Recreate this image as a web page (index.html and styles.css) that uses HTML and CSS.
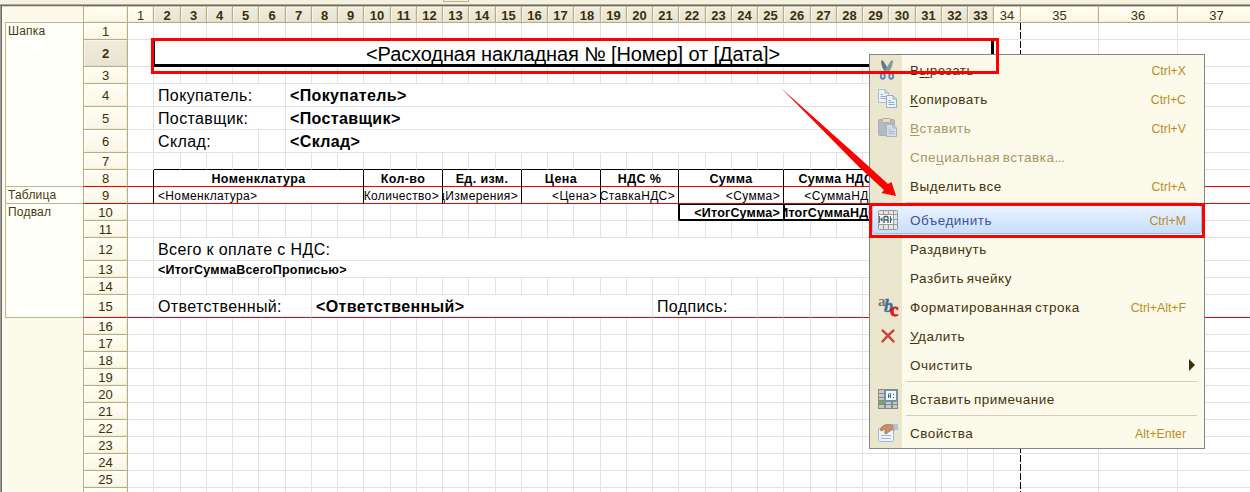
FILE: index.html
```html
<!DOCTYPE html>
<html lang="ru">
<head>
<meta charset="utf-8">
<title>Макет</title>
<link rel="stylesheet" href="styles.css">
</head>
<body>
<div class="window">
  <div class="toolbar"><span class="toolbar-tab"></span></div>
  <div class="sheet">
    <div class="sections">
      <div class="section-top"></div>
      <div class="section section-header">Шапка</div>
      <div class="section section-table">Таблица</div>
      <div class="section section-footer">Подвал</div>
    </div>
    <div class="grid" id="grid"></div>
  </div>

  <div class="page-break"></div>

  <div class="menu">
    <div class="item"><span class="icon"><svg width="20" height="20" viewBox="0 0 20 20"><path d="M3 .5L5 .5 11.500 11 9 14Q3 8 3 .5Z" fill="#5f788a"/><path d="M15 .5L13 .5 6.500 11 9 14Q15 8 15 .5Z" fill="#8699a5"/><ellipse cx="4.800" cy="16" rx="2" ry="2.800" fill="none" stroke="#5688b5" stroke-width="1.900"/><ellipse cx="13.200" cy="16" rx="2" ry="2.800" fill="none" stroke="#5688b5" stroke-width="1.900"/></svg></span><span class="label">В<u>ы</u>резать</span><span class="key">Ctrl+X</span></div>
    <div class="item"><span class="icon"><svg width="20" height="20" viewBox="0 0 20 20"><path d="M.5 .5H7L10.500 4V13.500H.5Z" fill="#edf4fa" stroke="#a9bfd4"/><path d="M7 .5V4H10.500M2.500 5.500H5M2.500 7.500H8M2.500 9.500H8" fill="none" stroke="#91acc7"/><path d="M8.500 6.500H15L18.500 10V18.500H8.500Z" fill="#edf4fa" stroke="#93b1cf"/><path d="M15 6.500V10H18.500M10.500 11.500H13M10.500 13.500H16.500M10.500 15.500H16.500" fill="none" stroke="#86a9cb"/></svg></span><span class="label"><u>К</u>опировать</span><span class="key">Ctrl+C</span></div>
    <div class="item off"><span class="icon"><svg width="20" height="20" viewBox="0 0 20 20"><rect x=".5" y="1.500" width="16" height="16" rx="1" fill="#b3bac4" stroke="#a7aeb8"/><rect x="4.500" y=".5" width="8" height="4" rx="1" fill="#e4dfcb" stroke="#b7a989"/><path d="M8.500 6.500H15L18.500 10V18.500H8.500Z" fill="#d4dce6" stroke="#a5b3c6"/><path d="M15 6.500V10H18.500M10.500 11.500H13M10.500 13.500H16.500M10.500 15.500H16.500" fill="none" stroke="#a5b5c9"/></svg></span><span class="label"><u>В</u>ставить</span><span class="key">Ctrl+V</span></div>
    <div class="item off"><span class="icon"></span><span class="label">Спе<u>ц</u>иальная вставка<span class="dots">...</span></span></div>
    <div class="item"><span class="icon"></span><span class="label">Вы<u>д</u>елить все</span><span class="key">Ctrl+A</span></div>
    <div class="sep"></div>
    <div class="item active"><span class="icon"><svg width="20" height="20" viewBox="0 0 20 20"><rect x=".5" y=".5" width="19" height="19" rx="1" fill="#e5e5e5" stroke="#999"/><path d="M0 4.500H20M0 14.500H20M5.500 0V5M10.500 0V5M15.500 0V20M5.500 14V20M10.500 14V20M15 9.500H20" fill="none" stroke="#9b9b9b"/><rect x="1" y="5" width="14" height="9" fill="#f5f9fc"/><path d="M1.500 6V13M12.500 6V13" stroke="#56728a" fill="none"/><path d="M2 9.500L4.500 7V12ZM14.500 9.500L12 7V12Z" fill="#33658d"/><path d="M6 13V7.500Q6 6.500 7 6.500H9Q10 6.500 10 7.500V13M6 10H10" fill="none" stroke="#4b5961" stroke-width="1.300"/></svg></span><span class="label">Объединить</span><span class="key">Ctrl+M</span></div>
    <div class="item"><span class="icon"></span><span class="label">Раздвинуть</span></div>
    <div class="item"><span class="icon"></span><span class="label">Разбить ячейку</span></div>
    <div class="item"><span class="icon abc"><i class="abc-a">a</i><i class="abc-b">b</i><i class="abc-c">c</i></span><span class="label">Форматированная строка</span><span class="key">Ctrl+Alt+F</span></div>
    <div class="item"><span class="icon"><svg width="20" height="20" viewBox="0 0 20 20"><path d="M4.500 4.500Q10 9 15.500 15.500M15.500 4.500Q9 10 4.500 15.500" fill="none" stroke="#c8453b" stroke-width="2.300" stroke-linecap="round"/></svg></span><span class="label"><u>У</u>далить</span></div>
    <div class="item"><span class="icon"></span><span class="label">Очистить</span><span class="more"></span></div>
    <div class="sep"></div>
    <div class="item"><span class="icon"><svg width="20" height="20" viewBox="0 0 20 20"><rect width="20" height="20" fill="#858b8c"/><path d="M1 1H6V4H1ZM1 5H6V8H1ZM1 9H6V11H1ZM1 16H6V19H1ZM8 16H13V19H8ZM15 16H19V19H15ZM8 13H13V15H8ZM15 13H19V15H15Z" fill="#c9cac5"/><path d="M1 12H6V14H1Z" fill="#65b548"/><rect x="7.500" y="1.500" width="11" height="10" fill="#edf7fc" stroke="#6598b5"/><path d="M10.500 9V5.500Q10.500 4.500 11.500 4.500T12.500 5.500V9M10.500 7H12.500M15.500 5V6M15.500 8V9" fill="none" stroke="#396481"/></svg></span><span class="label">Вставить примечание</span></div>
    <div class="sep"></div>
    <div class="item"><span class="icon"><svg width="20" height="20" viewBox="0 0 20 20"><rect x=".5" y="5.500" width="15" height="13" rx="1" fill="#edf5fc" stroke="#9eb8ce"/><path d="M3 12.500H13M3 15.500H13" stroke="#a0bad1" fill="none"/><path d="M2 6Q5 1 10 1.500L16 2 17 7Q14 6 12 8L8 11Q6 11 7 8L8 6 3 8Z" fill="#c98e69" stroke="#a16f52" stroke-width=".7"/><path d="M15 1H20V7L16 7Z" fill="#a9c7e3"/></svg></span><span class="label">Свойства</span><span class="key">Alt+Enter</span></div>
  </div>

  <div class="mark mark-title"></div>
  <div class="mark mark-item"></div>
  <svg class="arrow" width="1250" height="492" viewBox="0 0 1250 492"><path d="M781 88L860 158.500 888 184 891.500 182 896 196 881.500 193 884 190 859 167Z" fill="#f00"/></svg>
</div>
<script src="sheet.js"></script>
</body>
</html>
```
FILE: styles.css
```css
* { box-sizing: border-box; }
body { margin: 0; font-family: "Liberation Sans", Arial, sans-serif; }
.window { position: relative; width: 1250px; height: 492px; overflow: hidden; background: #fff; }
.toolbar { height: 6px; background: #f5f1dd; border-bottom: 1px solid #6e6b6b; box-shadow: inset 0 -1px #aaa7a3; padding-left: 443px; }
.toolbar-tab { display: block; width: 26px; height: 2px; border: 1px solid #b9b08a; border-top: 0; }
.sheet { display: flex; height: 486px; border-left: 1px solid #9c9a98; box-shadow: inset 1px 0 #706e6e; padding-left: 1px; }

.sections { width: 81px; flex: none; background: #fcfaea; padding-left: 3px; border-top: 1px solid #ddd8bd; }
.section-top { height: 15px; }
.section { border: 1px solid #bdb58e; border-right: 0; border-bottom: 0; background: #fffff9; color: #4a3a10; font-size: 12px; letter-spacing: .2px; line-height: 15px; padding: 1px 0 0 2px; }
.section-header { height: 164px; }
.section-table { height: 17px; }
.section-footer { height: 115px; border-bottom: 1px solid #bdb58e; }

.grid { flex: none; width: 1173px; }
.row { display: flex; }
.r17 { height: 17px; }
.r23 { height: 23px; }
.r27 { height: 27px; }
.cell { flex: none; display: flex; align-items: center; border-right: 1px solid #e2e2e2; border-bottom: 1px solid #e2e2e2; overflow: hidden; white-space: nowrap; color: #000; }
.head { justify-content: center; background: linear-gradient(#fffff3, #f9f6e4); border-color: #b7ae86; color: #3c2e0a; font-size: 13px; box-shadow: inset 1px 1px #fffffa, inset -1px -1px #f3efd9; }
.colhead { border-top: 1px solid #cbc3a0; padding-top: 2px; }
.rowhead { width: 45px; border-left: 1px solid #b7ae86; }
.sel { background: linear-gradient(#efecdd, #e7e4d2); font-weight: bold; box-shadow: inset 1px 1px #f8f6ea, inset -1px -1px #e0dcc8; }
.w26 { width: 26px; }
.w27 { width: 27px; }
.w78 { width: 78px; }
.w79 { width: 79px; }

.big { font-size: 16px; letter-spacing: .37px; padding: 2px 0 0 4px; }
.bold { font-weight: bold; }
.small { font-size: 12px; letter-spacing: .35px; padding: 1px 3px 0 4px; }
.center { justify-content: center; padding-left: 3px; }
.right { justify-content: flex-end; padding-left: 0; }
.th { font-size: 12.500px; letter-spacing: .4px; }
.tight { font-size: 12.500px; letter-spacing: .2px; }
.title { font-size: 20px; letter-spacing: -.1px; justify-content: center; padding: 3px 0 0; border-right: 2px solid #000; border-bottom: 2px solid #000; box-shadow: inset 1px 0 #000, inset 0 -1px #000, inset -1px 0 #000; }
.black-right { border-right-color: #000; }
.black-bottom { border-bottom-color: #000; }
.red-line .cell { border-bottom-color: #f00000; }
.total { border-color: #000; box-shadow: inset 1px 1px #000, inset 0 -1px #000; }

.page-break { position: absolute; left: 1020px; top: 23px; width: 1px; height: 469px; background: repeating-linear-gradient(#000 0 7px, #fff 7px 9px); }

.menu { position: absolute; left: 869px; top: 54px; width: 336px; height: 395px; border: 1px solid #858585; background: linear-gradient(to right, #ebe6ce 32px, #fcfaeb 32px); }
.item { display: flex; align-items: center; height: 29px; font-size: 13.500px; color: #45320b; padding-right: 18px; }
.icon { flex: none; width: 20px; height: 20px; margin: 0 12px 0 8px; }
.icon svg { display: block; }
.label { flex: 1; letter-spacing: .5px; word-spacing: -1.500px; white-space: nowrap; padding-top: 2px; }
.label u { text-underline-offset: 2px; }
.dots { letter-spacing: -.5px; }
.key { font-size: 12.300px; color: #bd8b1d; padding-top: 2px; }
.off { color: #a99569; }
.sep { height: 5px; display: flex; align-items: center; padding: 0 7px 0 36px; }
.sep::before { content: ""; flex: 1; height: 1px; background: #d3cebb; }
.active { height: 29px; margin: 0 2px; padding-right: 16px; background: linear-gradient(#eaf3ff, #c8defb); border: 1px solid #a3bce6; border-radius: 3px; color: #45509a; }
.active .icon { margin-left: 5px; }
.active .key { margin-right: -1px; }
.more { border-left: 6px solid #3c2e0a; border-top: 6px solid transparent; border-bottom: 6px solid transparent; margin-right: -9px; }
.abc { position: relative; font-family: "Liberation Serif", serif; font-weight: bold; line-height: 16px; }
.abc i { position: absolute; }
.abc-a { left: 0; top: -4px; font-size: 15px; font-style: normal; color: #777; }
.abc-b { left: 6px; top: 1px; font-size: 18px; color: #3f6d96; -webkit-text-stroke: .4px #3f6d96; }
.abc-c { left: 12px; top: 5px; font-size: 19px; font-style: normal; color: #dc1c1c; -webkit-text-stroke: .8px #dc1c1c; }

.mark { position: absolute; border: 3px solid #f00; }
.mark-title { left: 151px; top: 38px; width: 848px; height: 36px; }
.mark-item { left: 869px; top: 203px; width: 336px; height: 35px; }
.arrow { position: absolute; left: 0; top: 0; }
```
FILE: sheet.js
```js
const grid = document.getElementById('grid');
const width = c => c >= 37 ? 78 : c === 36 ? 79 : c === 35 ? 78 : c > 1 && (c - 2) % 4 === 0 ? 27 : 26;
const heights = [17, 27, 17, 23, 23, 23, 17, 17, 17, 17, 17, 23, 17, 17, 23];

// Merged cells per row: [first column, last column, text, classes]
const merged = {
  2: [[2, 33, '<Расходная накладная № [Номер] от [Дата]>', 'title']],
  4: [[2, 6, 'Покупатель:', 'big'], [7, 33, '<Покупатель>', 'big bold']],
  5: [[2, 6, 'Поставщик:', 'big'], [7, 33, '<Поставщик>', 'big bold']],
  6: [[2, 5, 'Склад:', 'big'], [7, 33, '<Склад>', 'big bold']],
  8: [[2, 9, 'Номенклатура'], [10, 12, 'Кол-во'], [13, 15, 'Ед. изм.'], [16, 18, 'Цена'],
      [19, 21, 'НДС %'], [22, 25, 'Сумма'], [26, 29, 'Сумма НДС']]
      .map(m => [...m, 'small bold center black-right th']),
  9: [[2, 9, '<Номенклатура>', 'small black-right'], [10, 12, '<Количество>', 'small right black-right'],
      [13, 15, '<ЕдИзмерения>', 'small right black-right'], [16, 18, '<Цена>', 'small right black-right'],
      [19, 21, '<СтавкаНДС>', 'small right black-right'], [22, 25, '<Сумма>', 'small right black-right'],
      [26, 29, '<СуммаНДС>', 'small right black-right']],
  10: [[22, 25, '<ИтогСумма>', 'small bold right total tight'], [26, 29, '<ИтогСуммаНДС>', 'small bold right total tight']],
  12: [[2, 33, 'Всего к оплате с НДС:', 'big']],
  13: [[2, 33, '<ИтогСуммаВсегоПрописью>', 'small bold tight']],
  15: [[2, 7, 'Ответственный:', 'big'], [8, 20, '<Ответственный>', 'big bold'], [21, 24, 'Подпись:', 'big']]
};

function add(parent, classes, text) {
  const el = document.createElement('div');
  el.className = classes;
  if (text !== undefined) el.textContent = text;
  parent.append(el);
  return el;
}

const top0 = add(grid, 'row r17');
add(top0, 'cell head colhead rowhead');
for (let c = 1; c <= 37; c++) {
  add(top0, `cell head colhead w${width(c)}${c > 1 && c < 34 ? ' sel' : ''}`, c);
}

for (let r = 1; r <= 27; r++) {
  const row = add(grid, `row r${heights[r - 1] || 17}${[8, 9, 15].includes(r) ? ' red-line' : ''}`);
  add(row, `cell head rowhead${r === 2 ? ' sel' : ''}`, r);
  for (let c = 1; c <= 37; c++) {
    const m = (merged[r] || []).find(x => x[0] === c);
    if (m) {
      let w = 0;
      for (let k = m[0]; k <= m[1]; k++) w += width(k);
      add(row, `cell ${m[3]}`, m[2]).style.width = w + 'px';
      c = m[1];
    } else {
      let cls = `cell w${width(c)}`;
      if (c === 1 && (r === 8 || r === 9)) cls += ' black-right';
      if (r === 7 && c > 1 && c < 30) cls += ' black-bottom';
      if (r === 10 && c === 21) cls += ' black-right';
      add(row, cls);
    }
  }
}
```
